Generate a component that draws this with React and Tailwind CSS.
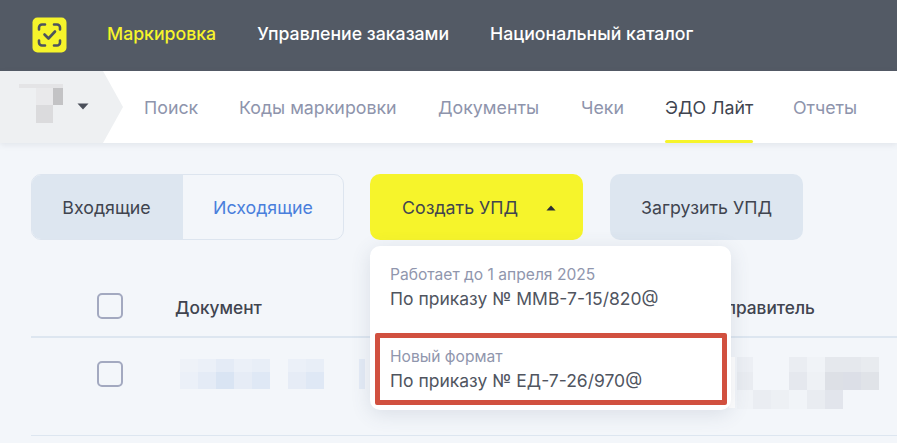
const Logo = () => (
    <svg width="35" height="36" viewBox="0 0 35 36" fill="none">
        <rect x="0.5" y="0.5" width="34" height="35" rx="5" fill="#f6f42b" />
        <g stroke="#4d535e" strokeWidth="2.6" strokeLinecap="round" strokeLinejoin="round">
            <path d="M7 12.5V10.5a3 3 0 0 1 3-3h3" />
            <path d="M22 7.5h3a3 3 0 0 1 3 3v2" />
            <path d="M7 23.5v2a3 3 0 0 0 3 3h3" />
            <path d="M22 28.5h3a3 3 0 0 0 3-3v-2" />
            <path d="M12.5 17.5l4 4 6.5-7" />
        </g>
    </svg>
)

const Caret = ({ up, color, w = 12, h = 7 }) => (
    <svg width={w} height={h} viewBox="0 0 12 7">
        <path d={up ? "M0.5 6.5L6 0.5l5.5 6z" : "M0.5 0.5L6 6.5l5.5-6z"} fill={color} />
    </svg>
)

const Checkbox = () => <div className="w-[26px] h-[26px] rounded-[5px] border-2 border-[#a3a9c0] shrink-0"></div>

const PixelRow = ({ cells, h }) => (
    <div className={`flex ${h}`}>
        {cells.map((c, i) => (
            <div key={i} className={`w-[18px] h-full ${c}`}></div>
        ))}
    </div>
)

const tabs = [
    { name: "Поиск", w: "w-[95px]" },
    { name: "Коды маркировки", w: "w-[199px]" },
    { name: "Документы", w: "w-[143px]" },
    { name: "Чеки", w: "w-[84px]" },
    { name: "ЭДО Лайт", w: "w-[128px]", active: true },
    { name: "Отчеты", w: "w-[80px]" },
]

const App = () => {
    return (
        <div className="w-full h-[443px] overflow-hidden bg-[#f3f6fa] font-['Inter',sans-serif] text-[#40444f]">
            <div className="h-[71px] bg-[#535a65] flex items-center pl-[32px] pb-[2px] text-[17.7px] font-medium text-white">
                <Logo />
                <span className="ml-[40px] text-[#f6f42b]">Маркировка</span>
                <span className="ml-[41px]">Управление заказами</span>
                <span className="ml-[41px]">Национальный каталог</span>
            </div>

            <div className="h-[72px] bg-white flex shadow-[0_2px_6px_rgba(80,90,110,0.1)] relative">
                <div className="w-[123px] h-full bg-[#eef0f2] [clip-path:polygon(0_0,103px_0,123px_50%,103px_100%,0_100%)] flex items-center pl-[19px] shrink-0">
                    <div className="w-[44px] flex flex-col mt-[-7px]">
                        <div className="h-[4px] w-[44px] bg-[#e4e4e6]"></div>
                        <div className="flex ml-[17px] h-[17px]">
                            <div className="w-[17px] bg-[#e9e9eb]"></div>
                            <div className="w-[10px] bg-[#c3c3c5]"></div>
                        </div>
                        <div className="ml-[17px] w-[17px] h-[18px] bg-[#dbdbdd]"></div>
                    </div>
                    <div className="ml-[14px] mt-[-1px] flex">
                        <Caret color="#4a4f5a" />
                    </div>
                </div>
                <div className="flex ml-[21px] text-[17.8px] text-[#8e94ac]">
                    {tabs.map((t) => (
                        <div key={t.name} className={`${t.w} h-full flex flex-col`}>
                            <div className="inline-flex flex-col self-start h-full">
                                <span className={`mt-[24px] ${t.active ? "text-[#40444f]" : ""}`}>{t.name}</span>
                                {t.active && <div className="mt-auto h-[3px] rounded-full bg-[#f6f42b]"></div>}
                            </div>
                        </div>
                    ))}
                </div>
            </div>

            <div className="flex pl-[31px] pt-[31px] text-[17.8px]">
                <div className="w-[313px] h-[66px] rounded-[10px] border border-[#dde5ef] flex overflow-hidden">
                    <div className="w-[151px] pt-[2px] pr-[2px] bg-[#dde6f0] flex items-center justify-center">Входящие</div>
                    <div className="flex-1 pt-[2px] flex items-center justify-center text-[#4a7fdc]">Исходящие</div>
                </div>
                <div className="relative ml-[26px]">
                    <div className="w-[213px] h-[66px] pt-[2px] rounded-[10px] bg-[#f6f42b] flex items-center pl-[32px]">
                        <span>Создать УПД</span>
                        <div className="ml-[28px] flex">
                            <Caret up color="#2b2e36" w={10} h={6} />
                        </div>
                    </div>
                    <div className="absolute z-10 top-[72px] left-0 w-[361px] h-[164px] rounded-[10px] bg-white shadow-[0_4px_20px_rgba(70,85,110,0.14)] px-[20px] text-[#50555f]">
                        <div className="pt-[20px] text-[15.6px] leading-[18px] text-[#9096ad]">Работает до 1 апреля 2025</div>
                        <div className="mt-[5px] text-[17.5px] leading-[20px]">По приказу № ММВ-7-15/820@</div>
                        <div className="mt-[39px] text-[15.6px] leading-[18px] text-[#9096ad]">Новый формат</div>
                        <div className="mt-[5px] text-[17.5px] leading-[20px]">По приказу № ЕД-7-26/970@</div>
                        <div className="absolute left-[5px] top-[87px] w-[352px] h-[72px] border-[5px] border-[#d1503f] rounded-[2px]"></div>
                    </div>
                </div>
                <div className="ml-[27px] w-[193px] h-[66px] pt-[2px] rounded-[10px] bg-[#dde6f0] flex items-center justify-center">Загрузить УПД</div>
            </div>

            <div className="ml-[31px] mt-[31px]">
                <div className="h-[67px] flex items-start pl-[66px] pt-[22px] border-b-2 border-[#dde6f0]">
                    <Checkbox />
                    <span className="ml-[52px] mt-[2px] font-medium text-[17.3px]">Документ</span>
                    <span className="ml-[442px] mt-[2px] font-medium text-[17.3px]">Отправитель</span>
                </div>
                <div className="h-[98px] flex pl-[66px] border-b border-[#dde6f0]">
                    <div className="mt-[23px]"><Checkbox /></div>
                    <div className="ml-[57px] mt-[21px] flex flex-col">
                        <PixelRow h="h-[13px]" cells={["bg-[#eef2f8]", "bg-[#ebf0f8]", "bg-[#e4ebf6]", "bg-[#ebf0f8]", "bg-[#e8eef7]", "bg-transparent", "bg-[#ebf0f8]", "bg-[#e8eef7]"]} />
                        <PixelRow h="h-[17px]" cells={["bg-[#ebf0f8]", "bg-[#e4ebf6]", "bg-[#d9e4f3]", "bg-[#e6ecf6]", "bg-[#dfe8f5]", "bg-transparent", "bg-[#e6ecf6]", "bg-[#dfe8f5]"]} />
                    </div>
                    <div className="ml-[35px] mt-[21px] h-[30px] w-[6px] bg-[#e4ebf6]"></div>
                    <div className="ml-[364px] mt-[19px] h-[51px] w-[6px] bg-white"></div>
                    <div className="mt-[19px] flex flex-col">
                        <PixelRow h="h-[15px]" cells={["bg-[#eceff4] bg-clip-content pl-[2px]", "bg-transparent", "bg-transparent", "bg-[#eaedf2]", "bg-[#f0f3f7]", "bg-[#e5e8ed]", "bg-[#e5e8ed]", "bg-[#e8ebef]"]} />
                        <PixelRow h="h-[18px]" cells={["bg-[#e9ecf1] bg-clip-content pl-[2px]", "bg-transparent", "bg-transparent", "bg-[#e5e8ee]", "bg-[#eef1f5]", "bg-[#dde0e6]", "bg-[#dcdfe7]", "bg-[#e0e3e8]"]} />
                        <PixelRow h="h-[19px]" cells={["bg-[#f0f3f7] bg-clip-content pl-[2px]", "bg-[#eaedf2]", "bg-[#edf0f4]", "bg-[#f1f4f8]", "bg-[#e9ecf1]", "bg-[#e2e5ec]"]} />
                    </div>
                </div>
            </div>
        </div>
    )
}

export default App
